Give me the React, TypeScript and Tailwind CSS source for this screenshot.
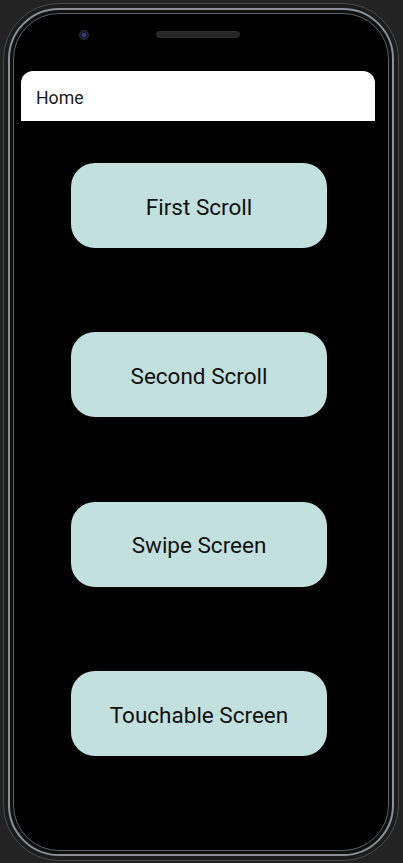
const buttons = ["First Scroll", "Second Scroll", "Swipe Screen", "Touchable Screen"];

export default function App() {
  return (
    <div className="w-[403px] h-[863px] bg-[#232323] pt-[3px] pl-[3px] pr-[4px] pb-[2px] overflow-hidden">
      {/* phone body */}
      <div className="h-full rounded-[56px] bg-[#1c1c1c] border border-[#4b4b4d] p-[4px]">
        <div className="h-full rounded-[51px] border-[2px] border-[#8a8f98] bg-[#101010] p-[3px]">
          <div className="h-full rounded-[46px] border border-[#5d6068] bg-black flex flex-col overflow-hidden">
            {/* camera + speaker */}
            <div className="h-[57px] flex items-start pt-[16px] pl-[65px]">
              <div className="w-[10px] h-[10px] rounded-full bg-[#1b1e33] border border-[#2c2f3a] flex items-center justify-center">
                <div className="w-[4px] h-[4px] rounded-full bg-[#3a4180]" />
              </div>
              <div className="ml-[67px] mt-[1px] w-[84px] h-[7px] rounded-full bg-[#262626] border border-[#303030]" />
            </div>

            {/* header */}
            <div className="ml-[7px] w-[354px] h-[50px] bg-white rounded-t-[12px] flex items-center pl-[15px] pt-[4px]">
              <span className="text-[17.7px] text-[#1a1a1a]" style={{ fontFamily: "Roboto, sans-serif" }}>
                Home
              </span>
            </div>

            {/* buttons */}
            <div className="flex flex-col items-center gap-[84.3px] pt-[42px] pr-[4px]">
              {buttons.map((label) => (
                <button
                  key={label}
                  className="w-[256px] h-[85px] shrink-0 rounded-[24px] bg-[#c2e0dd] flex items-center justify-center pt-[4px]"
                >
                  <span className="text-[22.5px] text-[#111111]" style={{ fontFamily: "Roboto, sans-serif" }}>
                    {label}
                  </span>
                </button>
              ))}
            </div>
          </div>
        </div>
      </div>
    </div>
  );
}
